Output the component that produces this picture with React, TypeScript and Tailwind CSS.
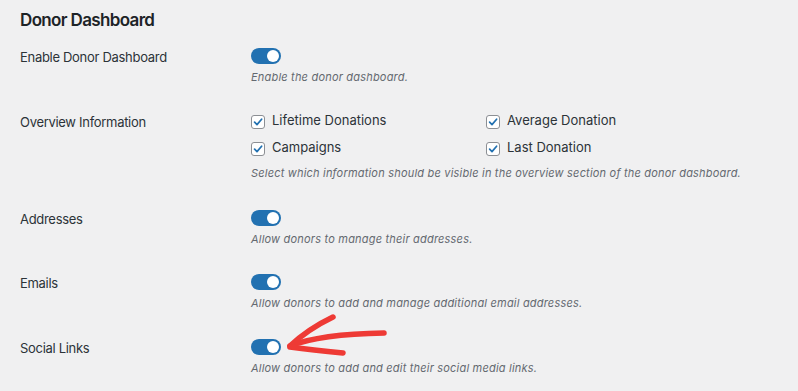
import React from "react";

const font = { fontFamily: "Inter, 'Noto Sans', sans-serif" };

function Toggle() {
  return (
    <div className="relative w-[30px] h-4 rounded-full bg-[#2271b1] shrink-0">
      <div className="absolute right-[2px] top-[2px] w-3 h-3 rounded-full bg-white" />
    </div>
  );
}

function Check({ label }: { label: string }) {
  return (
    <div className="flex items-start">
      <div className="mt-[3px] w-[14px] h-[14px] rounded-[3px] border border-[#8c8f94] bg-white flex items-center justify-center shrink-0">
        <svg width="10" height="10" viewBox="0 0 10 10">
          <path d="M1.6 5.2 L4 7.6 L8.6 2.2" fill="none" stroke="#2271b1" strokeWidth="1.7" strokeLinecap="round" strokeLinejoin="round" />
        </svg>
      </div>
      <span className="ml-[7px] text-[13px] leading-4 text-[#2c3338]">{label}</span>
    </div>
  );
}

function Desc({ children, className = "" }: { children: React.ReactNode; className?: string }) {
  return <p className={`text-[11px] leading-4 italic tracking-[0.2px] text-[#646970] ${className}`}>{children}</p>;
}

function ToggleRow({ label, desc, className }: { label: string; desc: string; className: string }) {
  return (
    <div className={`flex ${className}`}>
      <div className="w-[231px] shrink-0 pt-[1px] text-[13px] leading-4 tracking-[-0.3px] text-[#2c3338]">{label}</div>
      <div className="flex flex-col">
        <Toggle />
        <Desc className="mt-[5px]">{desc}</Desc>
      </div>
    </div>
  );
}

export default function App() {
  return (
    <div className="relative w-[798px] h-[391px] bg-[#f0f0f1] overflow-hidden" style={font}>
      <div className="pt-2 px-5">
        <h1 className="h-6 leading-6 text-[17px] font-semibold tracking-[-0.65px] text-[#1d2327]">Donor Dashboard</h1>
        <ToggleRow className="mt-4" label="Enable Donor Dashboard" desc="Enable the donor dashboard." />
        <div className="flex mt-[27px]">
          <div className="w-[231px] shrink-0 pt-[2px] text-[13px] leading-4 tracking-[-0.3px] text-[#2c3338]">Overview Information</div>
          <div className="flex flex-col">
            <div className="grid grid-cols-[235px_auto] gap-y-[10px]">
              <Check label="Lifetime Donations" />
              <Check label="Average Donation" />
              <Check label="Campaigns" />
              <Check label="Last Donation" />
            </div>
            <Desc className="mt-[9px]">
              Select which information should be visible in the overview section of the donor dashboard.
            </Desc>
          </div>
        </div>
        <ToggleRow className="mt-[29px]" label="Addresses" desc="Allow donors to manage their addresses." />
        <ToggleRow className="mt-[27px]" label="Emails" desc="Allow donors to add and manage additional email addresses." />
        <ToggleRow className="mt-[28px]" label="Social Links" desc="Allow donors to add and edit their social media links." />
      </div>
      <svg className="absolute left-0 top-0 pointer-events-none" width="798" height="391" viewBox="0 0 798 391">
        <g fill="none" stroke="#ee3a35" strokeLinecap="round" strokeLinejoin="round">
          <path d="M290 346 Q 320 334 384 333" strokeWidth="5.5" />
          <path d="M290 346 Q 308 329 333 317" strokeWidth="5.5" />
          <path d="M290 347 Q 312 350 343 353" strokeWidth="5.5" />
        </g>
      </svg>
    </div>
  );
}
